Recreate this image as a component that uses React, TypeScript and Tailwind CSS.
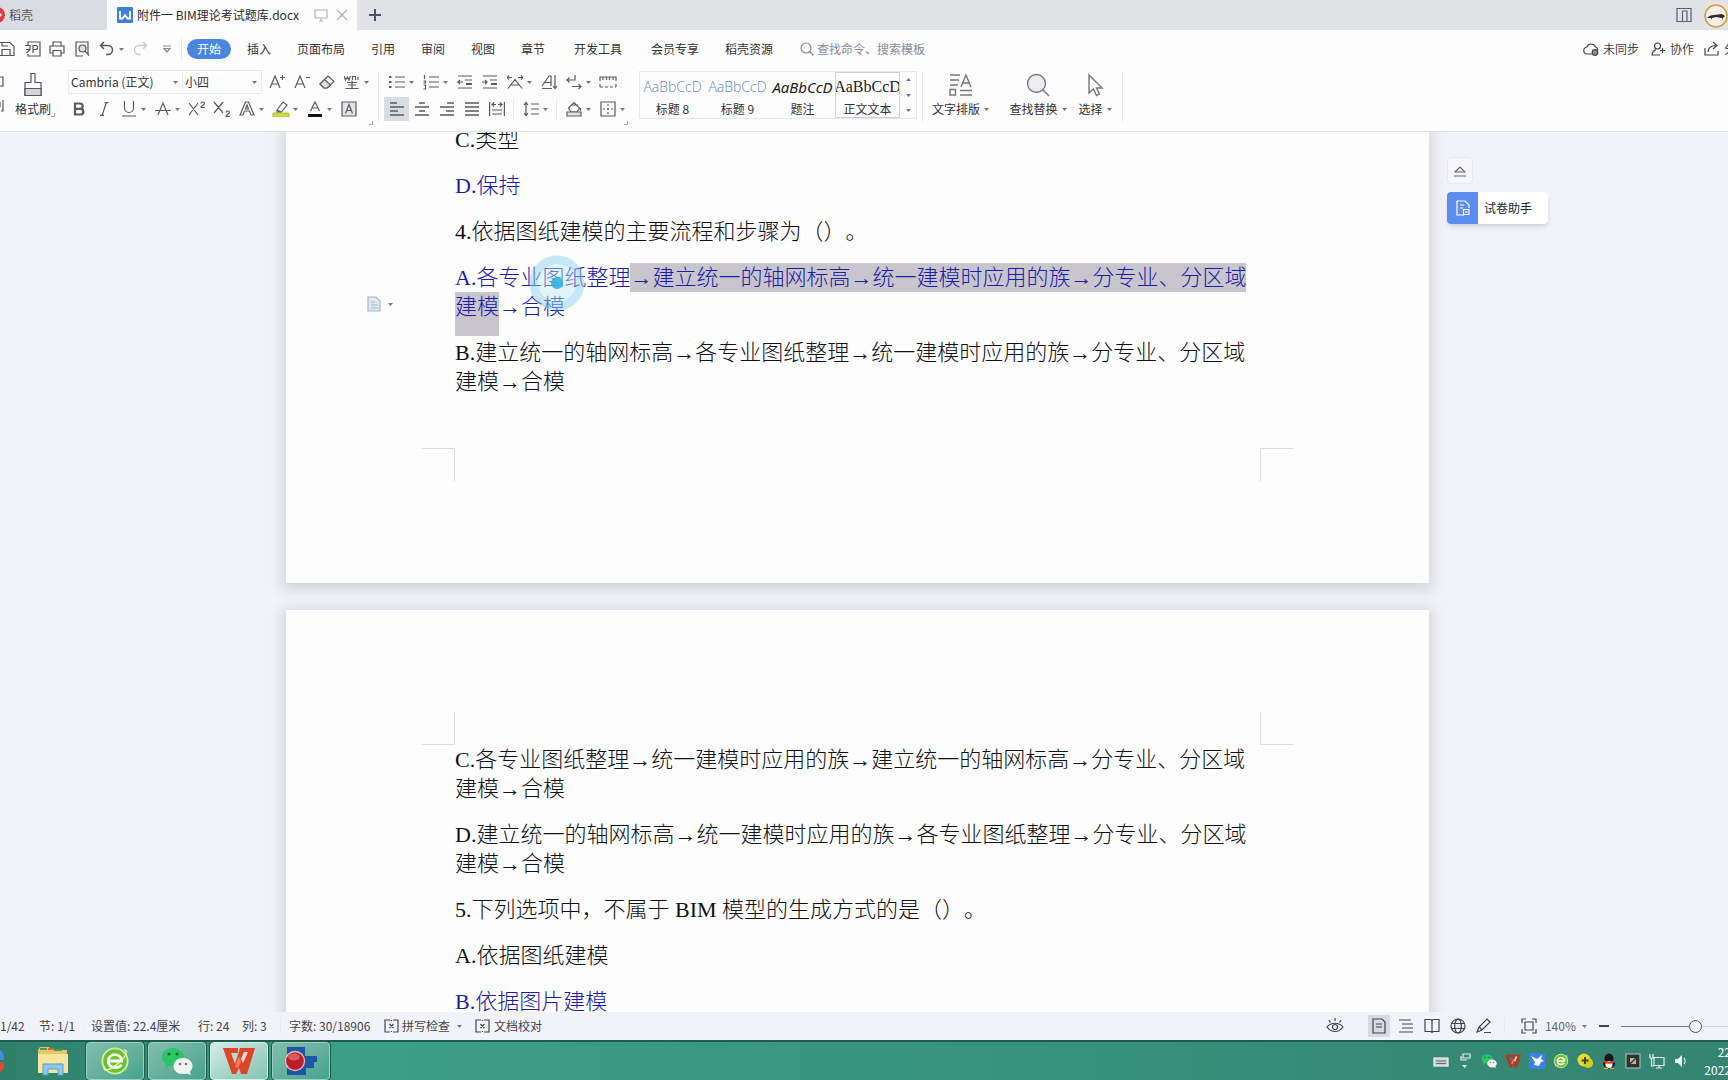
import React from 'react';

type IconProps = { w?: number; h?: number; children: React.ReactNode; className?: string; sw?: number };

function Ico({ w = 16, h = 16, sw = 1.2, children, className = '' }: IconProps) {
  return (
    <svg
      width={w}
      height={h}
      viewBox={`0 0 ${w} ${h}`}
      fill="none"
      stroke="currentColor"
      strokeWidth={sw}
      className={`shrink-0 ${className}`}
      aria-hidden="true"
    >
      {children}
    </svg>
  );
}

function Caret({ className = '' }: { className?: string }) {
  return (
    <svg width="5" height="3" viewBox="0 0 5 3" className={`shrink-0 fill-[#77777d] ${className}`} aria-hidden="true">
      <path d="M0 0h5L2.500 3z" />
    </svg>
  );
}

type ToolProps = { label: string; caret?: boolean; active?: boolean; children: React.ReactNode };

function Tool({ label, caret, active, children }: ToolProps) {
  return (
    <button type="button" aria-label={label} className="flex h-6 shrink-0 items-center text-[#5a5a60]">
      <span className={`flex h-6 w-[25px] items-center justify-center ${active ? 'bg-[#d8dde3]' : ''}`}>{children}</span>
      {caret && (
        <span className="flex w-[9px] items-center">
          <Caret />
        </span>
      )}
    </button>
  );
}

function Divider({ className = '' }: { className?: string }) {
  return <span className={`w-px shrink-0 bg-[#e9e9ed] ${className}`} />;
}

function TitleBar() {
  return (
    <div className="flex h-[30px] shrink-0 items-stretch bg-[#e0e2e6]">
      <button type="button" className="flex w-[107px] items-center gap-1 bg-[#d9dce0] text-[#55555b]">
        <svg width="5" height="16" viewBox="0 0 5 16" aria-hidden="true">
          <circle cx="-3" cy="8" r="8" fill="#e2383f" />
          <path d="M0 6l2 2-2 2z" fill="#fff" />
        </svg>
        稻壳
      </button>
      <div className="flex w-[250px] items-center bg-[#fdfdfe] pl-[10px]">
        <Ico className="mr-1" sw={1.8}>
          <rect width="16" height="16" rx="1" fill="#3f7fd8" stroke="none" />
          <path d="M3 4v7.500h2.500L8 8l2.500 3.500H13V4" stroke="#fff" />
        </Ico>
        <span className="w-[167px] text-[#2c2c31]">附件一 BIM理论考试题库.docx</span>
        <Ico w={14} h={14} className="ml-[10px] text-[#b4b4ba]">
          <path d="M1 2h12v8H1zM5 13h4M7 10v3" />
        </Ico>
        <button type="button" aria-label="关闭" className="ml-2 text-[#b0b0b6]">
          <Ico w={12} h={12}>
            <path d="M1 1l10 10M11 1L1 11" />
          </Ico>
        </button>
      </div>
      <button type="button" aria-label="新建" className="flex w-9 items-center justify-center text-[#4c5160]">
        <Ico w={12} h={12} sw={2}>
          <path d="M6 0v12M0 6h12" />
        </Ico>
      </button>
      <div className="ml-auto flex items-center gap-3">
        <button type="button" aria-label="窗口" className="text-[#5c6270]">
          <Ico>
            <path d="M1 1.500h14v13H1zM6.500 4v10M6.500 4H11v10.500" />
          </Ico>
        </button>
        <svg width="24" height="26" viewBox="0 0 24 26" aria-hidden="true">
          <rect width="24" height="26" fill="#e9e4da" />
          <circle cx="12" cy="14" r="11" fill="#f4efe6" stroke="#c8a05e" strokeWidth="1.600" />
          <path d="M3 16c2-2 4-3 7-3l8-1 3 2-2 2-1 2v-2l-6-1-4 1-1 2v-2z" fill="#2d2a2a" />
        </svg>
      </div>
    </div>
  );
}

const menus: [string, string][] = [
  ['插入', 'w-[56px]'],
  ['页面布局', 'w-[68px]'],
  ['引用', 'w-[56px]'],
  ['审阅', 'w-[44px]'],
  ['视图', 'w-[56px]'],
  ['章节', 'w-[44px]'],
  ['开发工具', 'w-[86px]'],
  ['会员专享', 'w-[68px]'],
  ['稻壳资源', 'w-[80px]'],
];

function MenuBar() {
  return (
    <div className="flex h-[38px] shrink-0 items-center overflow-hidden">
      <div className="flex w-[181px] shrink-0 items-center text-[#55555b]">
        <button type="button" aria-label="保存">
          <Ico>
            <path d="M-1 1.500h11l4 4v9H-1M2 14V8.500h8V14M2 1.500V5h6" />
          </Ico>
        </button>
        <button type="button" aria-label="输出为PDF" className="ml-[9px]">
          <Ico>
            <path d="M3 4V1h12v14H3v-2M0 4.500h5v4H1M5 8.500L1.500 12M8 12V4.500h2.500a2 2 0 010 4H8" />
          </Ico>
        </button>
        <button type="button" aria-label="打印" className="ml-2">
          <Ico>
            <path d="M4 5V1h8v4M4 12H1V5h14v7h-3M4 9.500h8V15H4z" />
          </Ico>
        </button>
        <button type="button" aria-label="打印预览" className="ml-[9px]">
          <Ico>
            <path d="M9 15H2V1h12v12" />
            <circle cx="8.500" cy="7.500" r="3.500" fill="#dcdce2" />
            <path d="M11 10l4 4.500" />
          </Ico>
        </button>
        <button type="button" aria-label="撤销" className="ml-[9px] flex items-center gap-[5px]">
          <Ico w={15} sw={1.500}>
            <path d="M5 1L1.500 4.500 5 8M1.500 4.500H9a4.500 4.500 0 010 9H7" />
          </Ico>
          <Caret />
        </button>
        <button type="button" aria-label="恢复" className="ml-[9px] text-[#cacad0]">
          <Ico w={15} sw={1.500}>
            <path d="M10 1l3.500 3.500L10 8M13.500 4.500H6a4.500 4.500 0 000 9h2" />
          </Ico>
        </button>
        <button type="button" aria-label="更多" className="ml-[15px] text-[#88888e]">
          <Ico w={8} h={8}>
            <path d="M0 1h8M1 3.500L4 7l3-3.500z" />
          </Ico>
        </button>
      </div>
      <Divider className="h-[22px]" />
      <button type="button" className="ml-[5px] h-5 w-11 shrink-0 rounded-full bg-[#4a86e0] text-white">
        开始
      </button>
      <nav className="flex shrink-0 text-[#333338]">
        {menus.map(([m, w]) => (
          <button key={m} type="button" className={`shrink-0 ${w}`}>
            {m}
          </button>
        ))}
      </nav>
      <label className="ml-[11px] flex items-center gap-[3px] text-[#8a8a94]">
        <Ico w={14} h={14}>
          <circle cx="6" cy="6" r="5" />
          <path d="M9.500 9.500l4 4" />
        </Ico>
        <input
          aria-label="查找"
          placeholder="查找命令、搜索模板"
          className="w-[130px] bg-transparent outline-none placeholder:text-[#8a8a94]"
        />
      </label>
      <div className="ml-auto -mr-5 flex shrink-0 items-center text-[#44444a]">
        <button type="button" className="flex items-center gap-1">
          <Ico>
            <path d="M10 13H4.500a3.500 3.500 0 01-.5-7 4.500 4.500 0 018.500 0A3.500 3.500 0 0115 9" />
            <circle cx="12" cy="11.500" r="2.800" fill="#8c929c" />
          </Ico>
          未同步
        </button>
        <button type="button" className="ml-3 flex items-center gap-1">
          <Ico w={15}>
            <circle cx="6.500" cy="5" r="3" />
            <path d="M5 8.500C2.500 10 1 11.500 1 14h8M11.500 7v5M9 9.500h5" />
          </Ico>
          协作
        </button>
        <button type="button" className="ml-[10px] flex items-center gap-1">
          <Ico>
            <path d="M1 7v7h13v-4M4 11c0-4 3-6.500 8-6.500M9 1l4 3.500L9 8" />
          </Ico>
          分享
        </button>
      </div>
    </div>
  );
}

function GroupCorner() {
  return <span className="h-1 w-1 border-r border-b border-[#a9a9af]" />;
}

function AlignIcon({ d }: { d: string }) {
  return (
    <Ico sw={1.500}>
      <path d={d} />
    </Ico>
  );
}

function StyleCard({ sample, name, tone, active }: { sample: string; name: string; tone: string; active?: boolean }) {
  return (
    <button
      type="button"
      className={`flex h-[46px] w-[65px] flex-col items-center justify-between overflow-hidden border pt-1 ${
        active ? 'border-[#cfcfd4]' : 'border-transparent'
      }`}
    >
      <span className={`whitespace-nowrap leading-5 ${tone}`}>{sample}</span>
      <span className="leading-4 text-[#333338]">{name}</span>
    </button>
  );
}

function BigTool({ label, width, children }: { label: string; width: string; children: React.ReactNode }) {
  return (
    <button type="button" className={`flex flex-col items-center gap-[3px] text-[#333338] ${width}`}>
      <span className="flex h-[25px] items-center text-[#77777d]">{children}</span>
      <span className="flex items-center gap-1 whitespace-nowrap leading-[18px]">
        {label}
        <Caret />
      </span>
    </button>
  );
}

function Ribbon() {
  return (
    <div className="flex h-16 shrink-0 items-start overflow-hidden border-b border-[#dfe0e4]">
      <div className="flex w-[60px] shrink-0 pt-1">
        <button type="button" aria-label="剪切" className="flex w-[15px] flex-col gap-3 pt-1 text-[#55555b]">
          <Ico w={4} h={12}>
            <path d="M-1 1h4v9h-3" />
          </Ico>
          <Ico w={4} h={12}>
            <path d="M0 2v5M3 0v11H1" />
          </Ico>
        </button>
        <button type="button" className="flex flex-col items-center gap-[3px] text-[#333338]">
          <Ico w={20} h={25} className="text-[#55555b]">
            <path d="M8 1.500h4v9h6v13H2v-13h6z" />
            <path d="M2 16.500h16v7H2z" fill="#d5d5da" />
          </Ico>
          <span className="leading-[18px]">格式刷</span>
        </button>
        <span className="flex items-end pb-px">
          <GroupCorner />
        </span>
      </div>

      <div className="flex w-[318px] shrink-0 flex-col pt-[2px] pl-[6px]">
        <div className="flex items-center">
          <div className="mr-[2px] ml-[2px] flex h-6 w-[194px] items-center border border-[#e9e9ed] text-[#333338]">
            <label className="relative flex w-[114px] items-center border-r border-[#e9e9ed]">
              <select aria-label="字体" className="w-full appearance-none bg-transparent pl-[2px] outline-none">
                <option>Cambria (正文)</option>
              </select>
              <Caret className="absolute right-1" />
            </label>
            <label className="relative flex flex-1 items-center">
              <select aria-label="字号" className="w-full appearance-none bg-transparent pl-[2px] outline-none">
                <option>小四</option>
              </select>
              <Caret className="absolute right-1" />
            </label>
          </div>
          <Tool label="增大字号">
            <Ico>
              <path d="M1 14L6 2l5 12M3 10h6M11 3.500h5M13.500 1v5" />
            </Ico>
          </Tool>
          <Tool label="减小字号">
            <Ico>
              <path d="M1 14L6 2l5 12M3 10h6M12 3.500h4" />
            </Ico>
          </Tool>
          <Tool label="清除格式">
            <Ico>
              <path d="M9 2l6 5.500-7 6.500H5L1 10z" />
              <path d="M5.500 5.500l6 5.500-3.500 3H5L1 10z" fill="#dcdce2" />
            </Ico>
          </Tool>
          <Tool label="拼音指南" caret>
            <Ico>
              <path d="M0 2l1.500 4L3.500 3l1.500 3L6.500 2M8.500 6V2.500h3V6M14 6V2.500M3 8.500h10M8 6.500v2M4 11h8M8 8.500v6M1.500 14.500h13" />
            </Ico>
          </Tool>
        </div>
        <div className="mt-[3px] flex items-center">
          <Tool label="加粗">
            <Ico w={12} h={14} sw={2.200}>
              <path d="M2 1.500h5a2.700 2.700 0 010 5.400H2zM2 6.900h5.500a2.800 2.800 0 010 5.600H2z" />
            </Ico>
          </Tool>
          <Tool label="倾斜">
            <Ico w={10} h={14}>
              <path d="M7.500 0L3 14M5.500 .6h4M1 13.400h4" />
            </Ico>
          </Tool>
          <Tool label="下划线" caret>
            <Ico>
              <path d="M3.500 0v7a4.500 4.500 0 009 0V0M1 15h14" />
            </Ico>
          </Tool>
          <Tool label="删除线" caret>
            <Ico>
              <path d="M3 14L8 2l5 12M0 9.500h16" />
            </Ico>
          </Tool>
          <Tool label="上标">
            <Ico w={18}>
              <path d="M1 2l9 12M10 2L1 14M13 2.500c0-2 3.500-2 3.500 0 0 1.500-3.500 2-3.500 4H17" />
            </Ico>
          </Tool>
          <Tool label="下标">
            <Ico w={18}>
              <path d="M1 1l9 11M10 1L1 12M13 11.500c0-2 3.500-2 3.500 0 0 1.500-3.500 2-3.500 3.800H17" />
            </Ico>
          </Tool>
          <Tool label="文字效果" caret>
            <Ico>
              <path d="M1 14L6.500 1h3L15 14h-3l-1.500-4h-5L4 14zM6.500 8L8 4l1.500 4z" />
            </Ico>
          </Tool>
          <Tool label="突出显示" caret>
            <Ico w={18}>
              <rect x="1" y="12" width="16" height="4" rx="1" fill="#cfdc3c" stroke="#b3bf35" />
              <path d="M5 9l6-8 4 3-5.500 7H5zM5 9l4.500 2" />
            </Ico>
          </Tool>
          <Tool label="字体颜色" caret>
            <Ico>
              <path d="M3.500 10L8 1l4.500 9M5 7h6" />
              <path d="M1 14.500h14" stroke="#111" strokeWidth="3" />
            </Ico>
          </Tool>
          <Tool label="字符底纹">
            <Ico>
              <path d="M1 1h14v14H1z" fill="#e4e4e8" />
              <path d="M4.500 12.500L8 3.500l3.500 9M5.500 9.500h5" />
            </Ico>
          </Tool>
        </div>
        <span className="flex justify-end pr-[5px]">
          <GroupCorner />
        </span>
      </div>

      <Divider className="mt-1 h-[50px]" />

      <div className="flex w-[254px] shrink-0 flex-col pt-[2px] pl-[5px]">
        <div className="flex items-center">
          <Tool label="项目符号" caret>
            <Ico>
              <path d="M6 3h10M6 8h10M6 13h10" />
              <path d="M0 3h2.500M0 8h2.500M0 13h2.500" strokeWidth="2.200" />
            </Ico>
          </Tool>
          <Tool label="编号" caret>
            <Ico>
              <path d="M6 3h10M6 8h10M6 13h10M1.500 1v4M.5 7h2v2h-2M.5 11h2v4h-2" />
            </Ico>
          </Tool>
          <Tool label="减少缩进">
            <Ico>
              <path d="M1 2h14M8 6h7M1 14h14M6 8H0M3 6L1 8l2 2" />
              <path d="M9 10h6" strokeWidth="2" />
            </Ico>
          </Tool>
          <Tool label="增加缩进">
            <Ico>
              <path d="M1 2h14M8 6h7M1 14h14M0 8h5M3 6l2 2-2 2" />
              <path d="M9 10h6" strokeWidth="2" />
            </Ico>
          </Tool>
          <Tool label="中文版式" caret>
            <Ico>
              <path d="M1 14.500L8 5.500l7 9M4 11h8M0 3.500h5M2 1.500l-2 2 2 2M11 3.500h5M14 1.500l2 2-2 2" />
            </Ico>
          </Tool>
          <Tool label="排序">
            <Ico>
              <path d="M1 12L8 2h2v10M4 8.500h6M1 14.500h10M14 1v13M12 12l2 2.500 2-2.500" />
            </Ico>
          </Tool>
          <Tool label="显示编辑标记" caret>
            <Ico>
              <path d="M9 1v5H1M3.500 3.500L1 6l2.500 2.500M6 12.500h9M12.500 10l2.500 2.500-2.500 2.500" />
            </Ico>
          </Tool>
          <Tool label="制表位">
            <Ico w={18}>
              <path d="M1 7V3h16v4M4 3v3M7.500 3v3M10.500 3v3M14 3v3" />
              <path d="M1 10v3M1 13h16M17 10v3" strokeDasharray="3 2" />
            </Ico>
          </Tool>
        </div>
        <div className="mt-[3px] flex items-center">
          <Tool label="左对齐" active>
            <AlignIcon d="M1 2h7M1 6h14M1 10h8M1 14h14" />
          </Tool>
          <Tool label="居中">
            <AlignIcon d="M5 2h6M1 6h14M5 10h6M1 14h14" />
          </Tool>
          <Tool label="右对齐">
            <AlignIcon d="M8 2h7M1 6h14M7 10h8M1 14h14" />
          </Tool>
          <Tool label="两端对齐">
            <AlignIcon d="M1 2h14M1 6h14M1 10h14M1 14h14" />
          </Tool>
          <Tool label="分散对齐">
            <Ico>
              <path d="M.6 1v14M15.400 1v14M3 3.500h4M9 3.500h4M5 1.500l-2 2 2 2M11 1.500l2 2-2 2M3 9h10M3 13h10" />
            </Ico>
          </Tool>
          <span className="flex w-[9px] justify-center">
            <Divider className="h-5" />
          </span>
          <Tool label="行距" caret>
            <Ico>
              <path d="M3 1.500v13M1 4l2-2.500L5 4M1 12l2 2.500L5 12M8 3h8M8 8h8M8 13h8" />
            </Ico>
          </Tool>
          <span className="flex w-[9px] justify-center">
            <Divider className="h-5" />
          </span>
          <Tool label="底纹颜色" caret>
            <Ico>
              <path d="M2.500 7L8 1.500 13.500 7 11 11H5zM5 4h7M14.500 7v3" />
              <path d="M1 11h14v4H1z" fill="#e0e0e4" />
            </Ico>
          </Tool>
          <Tool label="边框" caret>
            <Ico>
              <path d="M1 1h14v14H1z" />
              <path d="M8 3v10M3 8h10" strokeDasharray="2 2" />
            </Ico>
          </Tool>
        </div>
        <span className="flex justify-end pr-[5px]">
          <GroupCorner />
        </span>
      </div>

      <div className="mt-[3px] ml-[6px] flex shrink-0 items-stretch border border-[#e9e9ed]">
        <StyleCard sample="AaBbCcD" name="标题 8" tone="font-['Open_Sans',sans-serif] text-sm font-light text-[#5b8cc0]" />
        <StyleCard sample="AaBbCcD" name="标题 9" tone="font-['Open_Sans',sans-serif] text-sm font-light text-[#5b8cc0]" />
        <StyleCard sample="AaBbCcD" name="题注" tone="font-['Noto_Sans',sans-serif] text-[15px] italic text-[#222226]" />
        <StyleCard
          sample="AaBbCcD"
          name="正文文本"
          tone="font-['Liberation_Serif',serif] text-base text-[#222226]"
          active
        />
        <div className="flex w-4 flex-col items-center justify-between py-[6px]">
          <Caret className="rotate-180" />
          <Caret />
          <Caret />
        </div>
      </div>
      <Divider className="mt-1 ml-[5px] h-[50px]" />
      <div className="flex shrink-0 pt-1">
        <BigTool label="文字排版" width="w-[75px]">
          <Ico w={24} h={24} sw={1.400}>
            <path d="M1 2h10M1 7h9M1 12h8M12 14l5-12 5 12M14 10h6M1 16.500h5.500V22H1zM11 17.500h12M11 22h12" />
          </Ico>
        </BigTool>
        <BigTool label="查找替换" width="w-[80px]">
          <Ico w={24} h={24} sw={1.400}>
            <circle cx="10.500" cy="10.500" r="9" fill="#ececf1" />
            <path d="M17 17l6 6" />
          </Ico>
        </BigTool>
        <BigTool label="选择" width="w-[34px]">
          <Ico w={18} h={24} sw={1.400}>
            <path d="M3 2v18l4.500-4 3 6.500 3-1.500-3-6h5.500z" />
          </Ico>
        </BigTool>
      </div>
      <Divider className="mt-1 ml-[10px] h-[50px]" />
    </div>
  );
}

function Corners({ edge }: { edge: 'top' | 'bottom' }) {
  const side = edge === 'top' ? 'border-b' : 'border-t';
  return (
    <div className="flex justify-between px-[136px]">
      <span className={`h-[33px] w-[33px] border-r border-[#dcdce0] ${side}`} />
      <span className={`h-[33px] w-[33px] border-l border-[#dcdce0] ${side}`} />
    </div>
  );
}

function Para({ blue, children }: { blue?: boolean; children: React.ReactNode }) {
  return <p className={`relative mb-[17px] ${blue ? 'text-[#1c1ca8]' : 'text-[#111113]'}`}>{children}</p>;
}

const body =
  "px-[169px] font-['Liberation_Serif','Noto_Sans_CJK_SC',serif] text-[22px] leading-[29px] font-light [text-spacing-trim:space-all]";

function Pages() {
  return (
    <div className="flex flex-col gap-[27px]">
      <article className="bg-[#fdfdfe] pb-[102px] shadow-[0_3px_12px_4px_rgba(60,64,72,0.16)]">
        <div className={`-mt-[7px] ${body}`}>
          <Para>C.类型</Para>
          <Para blue>D.保持</Para>
          <Para>4.依据图纸建模的主要流程和步骤为（）。</Para>
          <Para blue>
            A.各专业图纸整理
            <span className="bg-[#c8c6cc] py-[2px]">→建立统一的轴网标高→统一建模时应用的族→分专业、分区域</span>
            <span className="bg-[#c8c6cc] pt-[2px] pb-[17px]">建模</span>→合模
            <svg width="56" height="56" viewBox="0 0 56 56" className="absolute top-[-8px] left-[74px]" aria-hidden="true">
              <circle cx="28" cy="28" r="23" fill="none" stroke="#8fd3ee" strokeOpacity="0.5" strokeWidth="9" />
              <circle cx="28" cy="28" r="18" fill="#c2e9f8" fillOpacity="0.45" />
              <circle cx="28" cy="28" r="6" fill="#2aaee0" fillOpacity="0.85" />
            </svg>
            <button
              type="button"
              aria-label="粘贴选项"
              className="absolute top-[33px] left-[-88px] flex items-center gap-[7px] text-[#a9b9c6]"
            >
              <Ico w={14}>
                <path d="M1 1h8l4 4v10H1z" fill="#dfeaf0" />
                <path d="M4 6h4M4 9h7M4 12h7" />
              </Ico>
              <Caret />
            </button>
          </Para>
          <Para>B.建立统一的轴网标高→各专业图纸整理→统一建模时应用的族→分专业、分区域建模→合模</Para>
        </div>
        <div className="pt-[35px]">
          <Corners edge="bottom" />
        </div>
      </article>
      <article className="bg-[#fdfdfe] pt-[102px] shadow-[0_3px_12px_4px_rgba(60,64,72,0.16)]">
        <Corners edge="top" />
        <div className={body}>
          <Para>C.各专业图纸整理→统一建模时应用的族→建立统一的轴网标高→分专业、分区域建模→合模</Para>
          <Para>D.建立统一的轴网标高→统一建模时应用的族→各专业图纸整理→分专业、分区域建模→合模</Para>
          <Para>5.下列选项中，不属于 BIM 模型的生成方式的是（）。</Para>
          <Para>A.依据图纸建模</Para>
          <Para blue>B.依据图片建模</Para>
        </div>
      </article>
    </div>
  );
}

function SidePanel() {
  return (
    <aside className="z-10 flex flex-col items-start gap-2 pt-[25px] pl-[18px]">
      <button
        type="button"
        aria-label="收起"
        className="flex h-[27px] w-[26px] items-center justify-center rounded-sm border border-[#e8e8ed] bg-[#f6f6fa] text-[#66666c]"
      >
        <Ico w={12} h={12}>
          <path d="M1 7l5-5 5 5zM0 11h12" />
        </Ico>
      </button>
      <button type="button" className="flex h-8 items-center rounded-sm bg-white pr-4 text-[#222226] shadow-md">
        <span className="mr-[6px] flex h-8 w-[31px] items-center justify-center rounded-l-sm bg-[#5b8def] text-white">
          <Ico w={14}>
            <path d="M8 15H1V1h8l4 4v3M4 5h4M4 8h3" />
            <path d="M7.500 9.500h5.500v5H7.500zM9 12h3" />
          </Ico>
        </span>
        试卷助手
      </button>
    </aside>
  );
}

function CheckIcon() {
  return (
    <Ico w={15} h={14}>
      <path d="M6 1H1v12h5M9 1h5v12H9M7.500 1v1M7.500 12v1M5.500 5l4 4M9.500 5l-4 4" />
    </Ico>
  );
}

function StatusBar() {
  return (
    <footer className="z-10 flex h-7 shrink-0 items-center overflow-hidden bg-[#f2f3f8] text-[#44444a]">
      <div className="flex shrink-0 items-center whitespace-nowrap">
        <span className="w-[39px]">1/42</span>
        <span className="w-[52px]">节: 1/1</span>
        <span className="w-[107px]">设置值: 22.4厘米</span>
        <span className="w-[44px]">行: 24</span>
        <span className="w-[38px]">列: 3</span>
        <Divider className="mr-2 h-4" />
        <span className="w-[95px]">字数: 30/18906</span>
        <button type="button" className="flex w-[91px] items-center gap-[3px]">
          <CheckIcon />
          拼写检查
          <Caret className="ml-1" />
        </button>
        <button type="button" className="flex items-center gap-1">
          <CheckIcon />
          文档校对
        </button>
      </div>
      <div className="ml-auto flex shrink-0 items-center">
        <button type="button" aria-label="护眼模式" className="mr-6">
          <Ico w={18}>
            <path d="M1 9c4-5 12-5 16 0-4 6-12 6-16 0zM9 0v3M3 2l1.500 2.500M15 2l-1.500 2.500" />
            <circle cx="9" cy="9" r="2.500" />
          </Ico>
        </button>
        <button type="button" aria-label="页面视图" className="flex h-[22px] w-[22px] items-center justify-center bg-[#d8dbe2]">
          <Ico w={14}>
            <path d="M1 1h9l3 3v11H1zM4 6h6M4 9h6" />
          </Ico>
        </button>
        <button type="button" aria-label="大纲" className="ml-2">
          <Ico>
            <path d="M1 2h12M4 6h11M4 10h11M1 14h14" />
          </Ico>
        </button>
        <button type="button" aria-label="阅读版式" className="ml-[10px]">
          <Ico>
            <path d="M1 1.500h6l1 1 1-1h6v12H9l-1 1-1-1H1zM8 2.500v12" />
          </Ico>
        </button>
        <button type="button" aria-label="Web版式" className="ml-[10px]">
          <Ico>
            <circle cx="8" cy="8" r="7" />
            <ellipse cx="8" cy="8" rx="3.300" ry="7" />
            <path d="M1.500 5.500h13M1.500 10.500h13" />
          </Ico>
        </button>
        <button type="button" aria-label="写作模式" className="ml-[10px]">
          <Ico>
            <path d="M1 14l2-5 8-8 3 3-8 8-5 2zM8 14.500h7M3 9l3 3" />
          </Ico>
        </button>
        <Divider className="mx-3 h-4" />
        <button type="button" aria-label="适合窗口" className="ml-1">
          <Ico>
            <path d="M1 5V1h4M11 1h4v4M15 11v4h-4M5 15H1v-4M4 4h8v8H4z" />
          </Ico>
        </button>
        <button type="button" className="ml-2 flex items-center gap-[6px] text-[#66666c]">
          140%
          <Caret />
        </button>
        <button type="button" aria-label="缩小" className="ml-3">
          <Ico w={10} h={10} sw={2}>
            <path d="M0 5h10" />
          </Ico>
        </button>
        <input
          type="range"
          aria-label="显示比例"
          min={0}
          max={100}
          defaultValue={72}
          className="ml-3 h-4 w-[107px] appearance-none bg-transparent [&::-webkit-slider-runnable-track]:h-px [&::-webkit-slider-runnable-track]:bg-linear-to-r [&::-webkit-slider-runnable-track]:from-[#77777d] [&::-webkit-slider-runnable-track]:from-70% [&::-webkit-slider-runnable-track]:to-[#d5d5da] [&::-webkit-slider-runnable-track]:to-70% [&::-webkit-slider-thumb]:-mt-[6px] [&::-webkit-slider-thumb]:h-[13px] [&::-webkit-slider-thumb]:w-[13px] [&::-webkit-slider-thumb]:appearance-none [&::-webkit-slider-thumb]:rounded-full [&::-webkit-slider-thumb]:border [&::-webkit-slider-thumb]:border-[#55555b] [&::-webkit-slider-thumb]:bg-[#f8f8fb]"
        />
      </div>
    </footer>
  );
}

function TaskButton({ label, active, children }: { label: string; active?: boolean; children: React.ReactNode }) {
  return (
    <button
      type="button"
      aria-label={label}
      className={`flex h-[38px] w-[58px] items-center justify-center rounded-sm border ${
        active
          ? 'border-[#d3efe6] bg-linear-to-br from-[#d5ece5] to-[#7fc4b1]'
          : 'border-[#9ad0c1] bg-linear-to-br from-[#82bdad] to-[#46a48c]'
      } shadow-[0_0_0_1px_#1f5c4c]`}
    >
      {children}
    </button>
  );
}

function Chat({ size }: { size: number }) {
  return (
    <svg width={size} height={size} viewBox="0 0 32 32" aria-hidden="true">
      <path d="M12 3c6 0 11 4 11 9s-5 9-11 9l-4 0-4 3 1-5C2 17 1 14 1 12c0-5 5-9 11-9z" fill="#2cc566" />
      <circle cx="8" cy="9" r="1.500" fill="#14633a" />
      <circle cx="16" cy="9" r="1.500" fill="#14633a" />
      <path d="M22 13c5 0 9.500 3.500 9.500 8 0 2.500-1 4-2.500 5.500l.5 3.500-3.500-1.500c-8 2-13.500-2-13.500-7.500 0-4.500 4.500-8 9.500-8z" fill="#f0f2f1" />
      <circle cx="19" cy="19" r="1.300" fill="#777" />
      <circle cx="25" cy="19" r="1.300" fill="#777" />
    </svg>
  );
}

function Wps({ size, color }: { size: number; color: string }) {
  return (
    <svg width={size} height={size} viewBox="0 0 32 32" aria-hidden="true">
      <path d="M0 3h15v5H8l4 11 5-16h15l-8 26h-6l-2-6-3 6H9z" fill={color} />
      <path d="M20 18l5-11h-4l-3 7z" fill="#f7d9cf" />
      <path d="M12 22l4-11 2 6-3 6z" fill="#f2795a" />
    </svg>
  );
}

function Browser({ size }: { size: number }) {
  return (
    <svg width={size} height={size} viewBox="0 0 32 32" aria-hidden="true">
      <circle cx="16" cy="16" r="13.500" fill="#6cc02f" stroke="#c9efa2" strokeWidth="2" />
      <path d="M9 16h14c0-9-14-9-14 0s11 8 14 4" fill="none" stroke="#fff" strokeWidth="3" />
      <path d="M5 22C2 29 12 25 20 18s10-13 6-14" fill="none" stroke="#e3f5b8" strokeWidth="1.500" />
    </svg>
  );
}

function Taskbar() {
  return (
    <div className="z-10 flex h-10 shrink-0 items-center overflow-hidden border-t-2 border-[#1f5c4c] bg-linear-to-r from-[#2f7f69] via-[#3ba086] via-20% to-[#348470]">
      <svg width="5" height="28" viewBox="0 0 5 28" className="shrink-0" aria-hidden="true">
        <path d="M0 3c3 1 4 5 4 10H0z" fill="#3c8ed8" />
        <path d="M0 15h4c0 6-1 9-4 10z" fill="#dd4a36" />
      </svg>
      <button type="button" aria-label="文件资源管理器" className="mr-[17px] ml-8">
        <svg width="32" height="32" viewBox="0 0 32 32" aria-hidden="true">
          <path d="M1 5l2-3h9l2 3h16v23H1z" fill="#e6c766" />
          <path d="M3 4h7M17 5h8" stroke="#4a9a4e" strokeWidth="2" />
          <path d="M11 4h6" stroke="#d6603f" strokeWidth="2" />
          <path d="M1 9h30v19H1z" fill="#f5e5a0" />
          <path d="M6 30V19h20v11h-5v-6h-10v6z" fill="#8cc8ea" stroke="#5b9dcb" />
        </svg>
      </button>
      <div className="flex gap-1">
        <TaskButton label="浏览器">
          <Browser size={30} />
        </TaskButton>
        <TaskButton label="微信">
          <Chat size={32} />
        </TaskButton>
        <TaskButton label="WPS" active>
          <Wps size={32} color="#df4429" />
        </TaskButton>
        <TaskButton label="录屏">
          <svg width="32" height="30" viewBox="0 0 32 30" aria-hidden="true">
            <path d="M2 1h18v9h12v6h-3v6h-8v7H2z" fill="#1f55a8" />
            <circle cx="10" cy="15" r="9.500" fill="#b81f26" stroke="#e7b8b8" strokeWidth="1.300" />
            <ellipse cx="9" cy="11" rx="6" ry="3.500" fill="#dc5a58" />
          </svg>
        </TaskButton>
      </div>
      <div className="ml-auto flex shrink-0 items-center">
        <div className="flex items-center gap-2 text-[#e4efec]">
          <Ico>
            <rect x="1" y="5" width="14" height="8" fill="#c7cfcd" stroke="#eef3f2" />
            <path d="M3 8h10M3 10.500h10" stroke="#66706e" />
          </Ico>
          <Ico>
            <path d="M6 1h7v4H6zM4 3v4h6" />
            <path d="M5 12h5l-2.500 3z" fill="currentColor" stroke="none" />
          </Ico>
          <Chat size={16} />
          <Wps size={16} color="#b23a2a" />
          <Ico>
            <rect width="16" height="16" rx="2" fill="#3b82e6" stroke="none" />
            <path d="M2 3l6 3 5-4-1 4 3 2-3 1-2 4-5-1 1-3z" fill="#fff" stroke="none" />
          </Ico>
          <Browser size={16} />
          <Ico>
            <circle cx="7" cy="7" r="6.500" fill="#e8dd2c" stroke="none" />
            <circle cx="11" cy="10" r="5" fill="#d3cf22" stroke="none" />
            <path d="M8 4v7M4.500 7.500h7" stroke="#3c4a12" strokeWidth="2" />
          </Ico>
          <Ico>
            <ellipse cx="8" cy="6" rx="4.500" ry="5.500" fill="#16181a" stroke="none" />
            <ellipse cx="8" cy="11" rx="6" ry="4.500" fill="#16181a" stroke="none" />
            <ellipse cx="8" cy="11.500" rx="3.500" ry="3.500" fill="#f3f3f3" stroke="none" />
            <path d="M3 8.500c3 1.500 7 1.500 10 0" stroke="#d93a30" strokeWidth="2" />
            <path d="M3 15.300h4M9 15.300h4" stroke="#e8a92d" />
          </Ico>
          <Ico>
            <rect x="1" y="1" width="14" height="14" fill="#2f3231" stroke="#aab4b1" />
            <rect x="5" y="5" width="6" height="6" fill="#c4b096" stroke="none" />
            <path d="M4 12l8-8" stroke="#2f3231" />
          </Ico>
          <Ico>
            <path d="M5 4.500h10v8H5zM10 12.500V15M7 15h6M1 1v4h3V1M2.500 5v8H5" />
          </Ico>
          <Ico>
            <path d="M2 6h3l4-4v12l-4-4H2z" fill="#eef5f3" stroke="none" />
            <path d="M11 5c1.500 1.500 1.500 4.500 0 6" />
          </Ico>
        </div>
        <div className="-mr-[3px] ml-[15px] flex flex-col items-end text-xs leading-[18px] text-white">
          <span>22</span>
          <span>2022</span>
        </div>
      </div>
    </div>
  );
}

export default function App() {
  return (
    <div className="flex h-screen flex-col overflow-hidden bg-[#f2f3f8] font-['Noto_Sans_CJK_SC',sans-serif] text-xs">
      <header className="z-10 flex shrink-0 flex-col bg-[#fdfdfe]">
        <TitleBar />
        <MenuBar />
        <Ribbon />
      </header>
      <main className="grid min-h-0 flex-1 grid-cols-[1fr_1143px_1fr] items-start overflow-hidden pr-[13px]">
        <div />
        <Pages />
        <SidePanel />
      </main>
      <StatusBar />
      <Taskbar />
    </div>
  );
}
